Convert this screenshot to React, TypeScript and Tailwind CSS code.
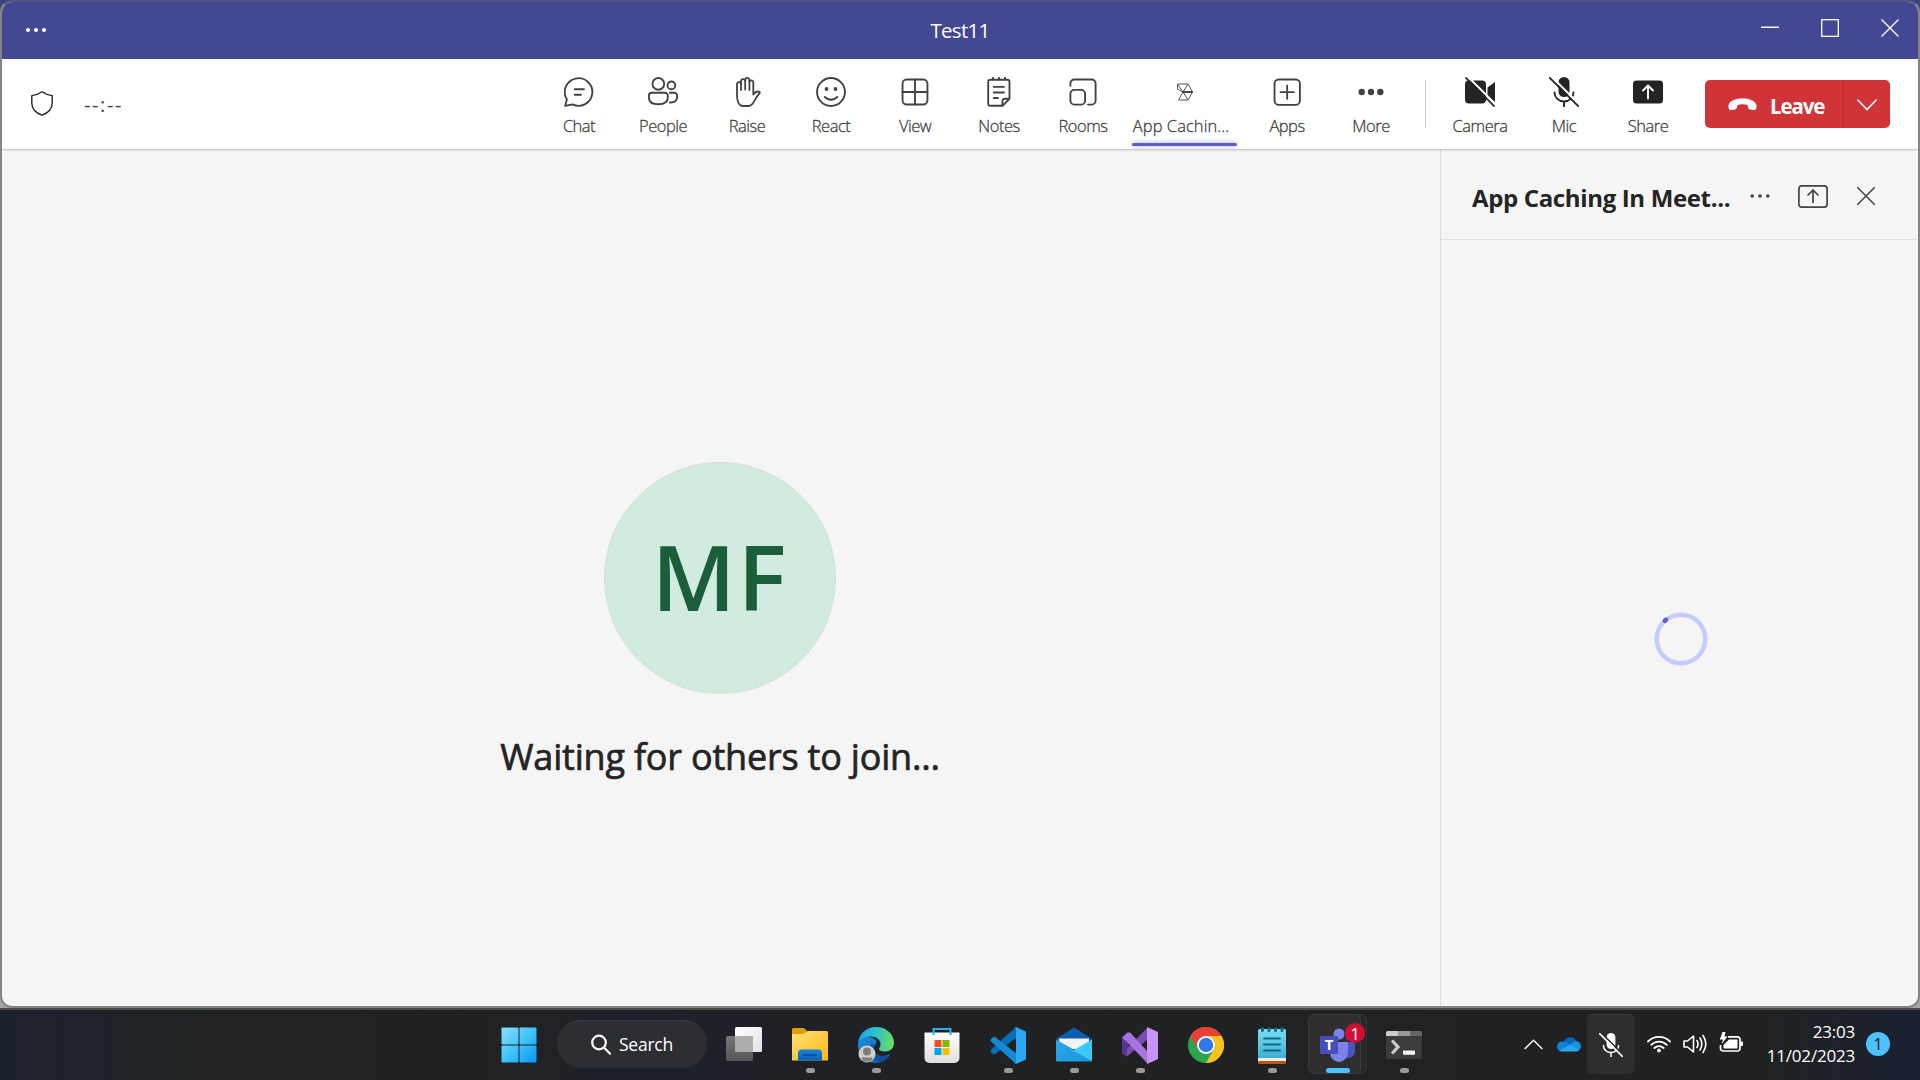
import React from "react";

type P = { children?: React.ReactNode };

function Line({ children, size = 30, w = 1.25 }: P & { size?: number; w?: number }) {
  return (
    <svg width={size} height={size} viewBox="0 0 20 20" fill="none" stroke="currentColor" strokeWidth={w} strokeLinecap="round" strokeLinejoin="round">
      {children}
    </svg>
  );
}

const ChatIcon = () => (
  <Line>
    <path d="M.8 19.300 1.900 14.900A9.200 9.200 0 1 1 5.700 18.300z" />
    <path d="M7.100 8.200h6.200M7.100 11.800h4.200" />
  </Line>
);
const PeopleIcon = () => (
  <Line>
    <circle cx="6.900" cy="4.600" r="3.900" />
    <circle cx="15.600" cy="5.600" r="2.600" />
    <path d="M2.400 10.500h8.900a1.900 1.900 0 0 1 1.900 1.900v1.300c0 3-2.700 4.500-6.300 4.500S.6 16.700.6 13.700v-1.300a1.900 1.900 0 0 1 1.800-1.900z" />
    <path d="M14.600 10.500h3a1.800 1.800 0 0 1 1.800 1.800v.9c0 2.700-1.700 4-4.800 3.800" />
  </Line>
);
const RaiseIcon = () => (
  <svg width="30" height="30" viewBox="0 0 30 30" fill="none" stroke="currentColor" strokeWidth="1.800" strokeLinecap="round" strokeLinejoin="round">
    <path d="M5 18V7.300a2 2 0 0 1 4-.3V4.300a2.100 2.100 0 0 1 4.200-.3V3a2.100 2.100 0 0 1 4.200 0v1.700a2 2 0 0 1 3.900.6V17.500c1.800-2.400 4-3.500 6-2.700.6.300.7.900.3 1.400-2.700 2.900-3.700 4.800-5.400 8-1.500 2.900-3.400 4.800-5.700 4.800h-5.300C6.500 29 5 23.500 5 18z" />
    <path d="M9 7v6M13.200 4v8.500M17.400 4.700v8.300" />
  </svg>
);
const ReactIcon = () => (
  <Line>
    <circle cx="10" cy="10" r="9.300" />
    <path d="M5.800 13.300c2.200 2.500 6.200 2.500 8.400 0" />
    <circle cx="7" cy="8" r=".65" fill="currentColor" />
    <circle cx="13" cy="8" r=".65" fill="currentColor" />
  </Line>
);
const ViewIcon = () => (
  <Line>
    <rect x="1.700" y="1.700" width="16.600" height="16.600" rx="2.800" />
    <path d="M10 1.700v16.600M1.700 10h16.600" />
  </Line>
);
const NotesIcon = () => (
  <Line>
    <path d="M4.200 1.800h11.400A1.300 1.300 0 0 1 17 3.200v11.300l-4.600 4.700H4.200a1.300 1.300 0 0 1-1.400-1.300V3.200a1.300 1.300 0 0 1 1.400-1.400zM12.300 19v-3.200a1.300 1.300 0 0 1 1.300-1.300H17" />
    <path d="M6 .5v1M10 .5v1M14 .5v1M6.500 6.600h6.800M6.500 10.300h6.800M6.500 14h2.800" />
  </Line>
);
const RoomsIcon = () => (
  <Line>
    <path d="M1.600 5.800V4.300A2.600 2.600 0 0 1 4.200 1.700h11.600a2.600 2.600 0 0 1 2.600 2.600v11.500a2.600 2.600 0 0 1-2.600 2.600h-2.500" />
    <rect x="1.600" y="8.600" width="9.800" height="9.800" rx="2.600" />
  </Line>
);
const CacheIcon = () => (
  <svg width="18" height="18" viewBox="0 0 18 18" fill="none" stroke="#555" strokeWidth="1">
    <path d="M1.500 1H12l4.500 8-4.500 8H2.500L7 9 1.500 6zM1.500 1 7 9M12 1 7 9M7 9l5 8" />
    <path d="M7 9h9.500" strokeWidth="1.400" stroke="#111" />
  </svg>
);
const AppsIcon = () => (
  <Line>
    <rect x="1.700" y="1.700" width="16.900" height="16.900" rx="2.800" />
    <path d="M10.100 5.700v8.800M5.700 10.100h8.800" />
  </Line>
);
const MoreIcon = () => (
  <svg width="30" height="30" viewBox="0 0 30 30" fill="currentColor">
    <circle cx="5.700" cy="15" r="3.200" /><circle cx="15" cy="15" r="3.200" /><circle cx="24.300" cy="15" r="3.200" />
  </svg>
);
const CameraIcon = () => (
  <svg width="30" height="30" viewBox="0 0 30 30" fill="#242424">
    <rect x="0" y="3.500" width="21" height="23" rx="4" />
    <path d="M22.500 10.500 30 5v20l-7.500-5.500z" />
    <path d="M2-1.200 31.300 28" stroke="#fff" strokeWidth="2" />
    <path d="M.5.500l29 29" stroke="#242424" strokeWidth="1.700" />
  </svg>
);
const MicOff = ({ size = 30, fg = "#242424", bg = "#fff" }) => (
  <svg width={size} height={size} viewBox="0 0 30 30" fill="none" strokeLinecap="round">
    <rect x="9.500" y="0" width="11" height="20" rx="5.500" fill={fg} />
    <path d="M5.500 15.500a9.500 9 0 0 0 19 0M15 24.500v5" stroke={fg} strokeWidth="1.900" />
    <path d="M2-1 31 28" stroke={bg} strokeWidth="2" />
    <path d="M.8.800l28.400 28.400" stroke={fg} strokeWidth="1.900" />
  </svg>
);
const ShareIcon = () => (
  <svg width="30" height="30" viewBox="0 0 30 30" fill="none" strokeLinecap="round" strokeLinejoin="round">
    <rect x="0" y="3.500" width="30" height="23" rx="3.500" fill="#242424" />
    <path d="M15 21.500V9M10 13.500l5-5 5 5" stroke="#fff" strokeWidth="1.900" />
  </svg>
);

function Tool({ icon, label, wide = false }: { icon: React.ReactNode; label: string; wide?: boolean }) {
  return (
    <div className={"relative flex h-[90px] flex-col items-center text-[#424242] " + (wide ? "w-[120px]" : "w-[84px]")}>
      <div className="mt-[18px] flex h-[30px] items-center">{icon}</div>
      <span className={"mt-[7px] text-[16.5px] leading-[24px] font-light whitespace-nowrap [-webkit-text-stroke:0.3px_#424242] " + (wide ? "-ml-[8px] tracking-[0.05px]" : "tracking-[-0.5px]")}>{label}</span>
      {wide && <div className="absolute bottom-[3px] left-[7px] h-[3px] w-[105px] rounded-full bg-[#5b5fc7] shadow-[0_0_5px_#5b5fc799]" />}
    </div>
  );
}

const WindowsIcon = () => (
  <svg width="36" height="36" viewBox="0 0 36 36">
    <defs><linearGradient id="win" x1="0" y1="0" x2="36" y2="36" gradientUnits="userSpaceOnUse"><stop stopColor="#8be0ff" /><stop offset=".5" stopColor="#3fc4fb" /><stop offset="1" stopColor="#0a93f5" /></linearGradient></defs>
    <g fill="url(#win)"><rect x=".5" y=".5" width="17" height="17" rx="1" /><rect x="18.500" y=".5" width="17" height="17" rx="1" /><rect x=".5" y="18.500" width="17" height="17" rx="1" /><rect x="18.500" y="18.500" width="17" height="17" rx="1" /></g>
  </svg>
);
const TaskViewIcon = () => (
  <svg width="36" height="36" viewBox="0 0 36 36">
    <defs>
      <linearGradient id="tv" x2="1" y2="1"><stop stopColor="#fff" /><stop offset="1" stopColor="#e2e2e2" /></linearGradient>
      <linearGradient id="tv2" x2="0" y2="1"><stop stopColor="#777" /><stop offset="1" stopColor="#555" /></linearGradient>
    </defs>
    <rect x="9" y="0" width="27" height="25" rx="1.500" fill="url(#tv)" />
    <rect x="0" y="9" width="27" height="25" rx="1.500" fill="url(#tv2)" />
    <path d="M9 9h18v16H10.500A1.500 1.500 0 0 1 9 23.500z" fill="#adadad" />
  </svg>
);
const FolderIcon = () => (
  <svg width="36" height="36" viewBox="0 0 36 36">
    <defs><linearGradient id="fo" x2="1" y2="1"><stop stopColor="#ffe07a" /><stop offset="1" stopColor="#fdb813" /></linearGradient><linearGradient id="fb" x2="0" y2="1"><stop stopColor="#1484dc" /><stop offset="1" stopColor="#0664b5" /></linearGradient></defs>
    <path d="M0 2.500A1.500 1.500 0 0 1 1.500 1H12l4 4v6H0z" fill="#e09f00" />
    <path d="M0 7h11.500L16 4h18.500A1.500 1.500 0 0 1 36 5.500v28H0z" fill="url(#fo)" />
    <path d="M6 33.500V26a3.500 3.500 0 0 1 3.500-3.500h17A3.500 3.500 0 0 1 30 26v7.500z" fill="url(#fb)" />
    <path d="M11.500 28h13" stroke="#064a8c" strokeWidth="1.600" strokeLinecap="round" />
  </svg>
);
const EdgeIcon = () => (
  <svg width="36" height="36" viewBox="0 0 36 36">
    <defs>
      <linearGradient id="e1" x1="0" y1=".4" x2="1" y2=".5"><stop stopColor="#1ba5e6" /><stop offset=".5" stopColor="#2fc2c9" /><stop offset="1" stopColor="#6be05a" /></linearGradient>
      <linearGradient id="e2" x2="1" y2="1"><stop stopColor="#1b8fe0" /><stop offset="1" stopColor="#0c59a4" /></linearGradient>
    </defs>
    <path d="M0 18c1-7 8-10 14-7.500 5 2 5 5 3.500 7-4 5 0 11.500 6 11.500 4 0 6-1 9-2.500C29.500 32 24.500 36 18 36 8 36 0 28 0 18z" fill="url(#e2)" />
    <path d="M12 20c0 8 5 15 11 14.800C28 34 31 30 32.500 26.500c-3 1.700-5.500 2.500-9 2.500-6 0-9.500-6-6-11.500-2.500 0-5.500 0-5.500 2.500z" fill="#124f9c" />
    <path d="M0 17C.5 7 8 0 18 0c11 0 18 8 18 15.500 0 6-4 9-9 9-4 0-6-1.300-6-2.500s1.500-2 1.500-5c0-4-4-7.500-10-7.500C6 9.500 1 13 0 17z" fill="url(#e1)" />
    <circle cx="9" cy="27" r="8.500" fill="#d0cecb" /><circle cx="9" cy="24.500" r="4" fill="#807b78" /><path d="M3.500 30.500h11c0 3-2.500 4-5.500 4s-5.500-1-5.500-4z" fill="#807b78" />
  </svg>
);
const StoreIcon = () => (
  <svg width="36" height="36" viewBox="0 0 36 36">
    <defs><linearGradient id="st" x2="0" y2="1"><stop stopColor="#fff" /><stop offset="1" stopColor="#dedede" /></linearGradient></defs>
    <path d="M.5 5.500h35V31a5 5 0 0 1-5 5h-25a5 5 0 0 1-5-5z" fill="url(#st)" />
    <path d="M9.500 8V2h17v6" fill="none" stroke="#2bb0ee" strokeWidth="2" />
    <rect x="10.500" y="13" width="7" height="7" fill="#f25022" /><rect x="18.500" y="13" width="7" height="7" fill="#7fba00" /><rect x="10.500" y="21" width="7" height="7" fill="#00a4ef" /><rect x="18.500" y="21" width="7" height="7" fill="#ffb900" />
  </svg>
);
const CodeIcon = () => (
  <svg width="36" height="37" viewBox="0 0 36 37">
    <path d="M26 0 1 22.500c-.8.800-.8 1.800 0 2.500l2 2c.7.500 1.500.5 2.200 0L27 10z" fill="#0070b8" />
    <path d="M26 37 1 14.500c-.8-.8-.8-1.800 0-2.500l2-2c.7-.5 1.500-.5 2.200 0L27 27z" fill="#1489d8" />
    <path d="M26 0l9 4c.7.300 1 .8 1 1.500v26c0 .700-.3 1.200-1 1.500l-9 4c-1 0-1-.8 0-2V2c-1-1.200-1-2 0-2z" fill="#2ba7f4" />
  </svg>
);
const MailIcon = () => (
  <svg width="36" height="36" viewBox="0 0 36 36">
    <defs><linearGradient id="ml" x2="1" y2="1"><stop stopColor="#2aa9ee" /><stop offset="1" stopColor="#1c94dd" /></linearGradient></defs>
    <path d="M0 12 18 1l18 11v8H0z" fill="#0a4f9e" /><path d="M0 12 18 .5 36 12z" fill="#0c5eb5" />
    <path d="M3 11.500h30V22H3z" fill="#f3f3f5" />
    <path d="M0 12.500 36 33a1.500 1.500 0 0 1-1.500 1.500h-33A1.500 1.500 0 0 1 0 33z" fill="url(#ml)" />
    <path d="M36 12.500V34L17 23.500z" fill="#3acbf5" />
  </svg>
);
const VsIcon = () => (
  <svg width="36" height="37" viewBox="0 0 36 37">
    <path d="M0 26.500 5 29.500 26 12V0z" fill="#7a4db3" />
    <path d="M0 10.500v16l5 3V22l2-3.500L5 15V6z" fill="#59378f" />
    <path d="M0 10.500 5.500 5.500 8 5.500 26 25v12L5 15z" fill="#a873df" />
    <path d="M25 0l10 4.500c.7.300 1 .8 1 1.500v25c0 .700-.3 1.200-1 1.500L25 37z" fill="#c794f7" />
  </svg>
);
const ChromeIcon = () => (
  <svg width="36" height="36" viewBox="0 0 36 36">
    <circle cx="18" cy="18" r="18" fill="#2da44f" />
    <path d="M2.400 9A18 18 0 0 1 33.600 9H18a9 9 0 0 0-7.800 13.500z" fill="#e94235" />
    <path d="M33.600 9A18 18 0 0 1 18 36l7.800-13.500A9 9 0 0 0 18 9z" fill="#fcc21b" />
    <circle cx="18" cy="18" r="9" fill="#fff" /><circle cx="18" cy="18" r="7.200" fill="#2b79ed" />
  </svg>
);
const NotepadIcon = () => (
  <svg width="28" height="37" viewBox="0 0 28 37">
    <defs><linearGradient id="np" x2="0" y2="1"><stop stopColor="#7bdcf2" /><stop offset="1" stopColor="#43afd0" /></linearGradient></defs>
    <rect y="30" width="28" height="7" rx="1" fill="#bb5712" /><rect y="30" width="28" height="4" fill="#eee" />
    <path d="M0 3.500A1.500 1.500 0 0 1 1.500 2h25A1.500 1.500 0 0 1 28 3.500V31H0z" fill="url(#np)" />
    <path d="M6 11.500h16M6 17.500h16M6 23.500h16" stroke="#066a88" strokeWidth="2" strokeLinecap="round" />
    <path d="M4.500 1.500v2M11 1.500v2M17.500 1.500v2M24 1.500v2" stroke="#0b6d8a" strokeWidth="3" strokeLinecap="round" />
  </svg>
);
const TeamsIcon = () => (
  <div className="relative h-9 w-9">
    <svg width="36" height="36" viewBox="0 0 36 36">
      <circle cx="30" cy="9.500" r="4" fill="#5059c9" /><path d="M24 15h11v10a6.500 6.500 0 0 1-11 4z" fill="#4b53bc" />
      <circle cx="19" cy="7" r="5.500" fill="#7b83eb" /><path d="M10 15h18v10a9 9.500 0 0 1-18 1z" fill="#7b83eb" />
      <rect x="0" y="9" width="18" height="18" rx="1.500" fill="#464eb8" />
    </svg>
    <span className="absolute top-[8px] left-0 w-[18px] text-center text-[15px] leading-[19px] font-bold text-white">T</span>
    <span className="absolute -top-[4px] left-[25px] flex h-5 w-5 items-center justify-center rounded-full bg-[#cf1034] text-[17px] leading-none text-white">1</span>
  </div>
);
const TerminalIcon = () => (
  <svg width="36" height="28" viewBox="0 0 36 28">
    <rect width="36" height="28" rx="1.500" fill="#3c3c3c" />
    <path d="M0 5V1.500A1.500 1.500 0 0 1 1.500 0H12v5z" fill="#ccc" /><path d="M12 0h12v5H12z" fill="#999" /><path d="M24 0h10.500A1.500 1.500 0 0 1 36 1.500V5H24z" fill="#666" />
    <path d="M6 9.500l6 6.500-6 6.500" fill="none" stroke="#ccc" strokeWidth="3.200" /><rect x="17" y="19.500" width="12" height="4.200" rx=".6" fill="#f2f2f2" />
  </svg>
);

function Task({ children, run = false, active = false }: P & { run?: boolean; active?: boolean }) {
  return (
    <div className="relative flex h-[70px] w-[66px] items-center justify-center">
      {active && <div className="absolute top-1 left-[10px] h-[60px] w-[52px] rounded-md border border-[#343434] bg-[#282829]" />}
      {active && <div className="absolute top-1 left-[3px] h-[60px] w-[53px] rounded-md border border-[#3a3a3a] bg-[#2e2e2f]" />}
      <div className="relative">{children}</div>
      {run && <div className="absolute bottom-[7px] left-[29px] h-[5px] w-[9px] rounded-full bg-[#9a9a9a]" />}
      {active && <div className="absolute bottom-[7px] left-[21px] h-[5px] w-6 rounded-full bg-[#4cc2ff]" />}
    </div>
  );
}

function TitleBar() {
  return (
    <header className="grid h-[57px] grid-cols-3 items-center bg-[#444791] text-white">
      <div className="flex gap-[4px] pb-[2px] pl-[24px]">
        <i className="h-[4px] w-[4px] rounded-full bg-white" /><i className="h-[4px] w-[4px] rounded-full bg-white" /><i className="h-[4px] w-[4px] rounded-full bg-white" />
      </div>
      <div className="pb-[2px] text-center text-[20.5px] leading-[28px] tracking-[-0.7px]">Test11</div>
      <div className="flex items-center justify-end gap-[42px] pr-[19px] pb-[5px]">
        <svg width="18" height="18" viewBox="0 0 18 18"><path d="M0 8.200h18" stroke="#fff" strokeWidth="1.400" /></svg>
        <svg width="18" height="18" viewBox="0 0 18 18"><rect x=".7" y=".7" width="16.600" height="16.600" fill="none" stroke="#fff" strokeWidth="1.300" /></svg>
        <svg width="18" height="18" viewBox="0 0 18 18"><path d="M.5.500l17 17M17.500.500l-17 17" stroke="#fff" strokeWidth="1.300" /></svg>
      </div>
    </header>
  );
}

function Toolbar() {
  return (
    <div className="relative z-10 flex h-[90px] items-start bg-white shadow-[0_1px_2px_#0000003a]">
      <svg className="mt-[32px] ml-[29px]" width="22" height="25" viewBox="0 0 22 25" fill="none" stroke="#242424" strokeWidth="1.400" strokeLinejoin="round">
        <path d="M11 .8C8 3 4.500 4.300.8 4.600V12c0 6 4.200 10 10.200 12.200C17 22 21.200 18 21.200 12V4.600C17.500 4.300 14 3 11 .8z" />
      </svg>
      <span className="mt-[32px] ml-[31px] text-[20px] leading-[28px] tracking-[1.600px] text-[#424242]">--:--</span>
      <div className="ml-auto flex">
        <Tool icon={<ChatIcon />} label="Chat" />
        <Tool icon={<PeopleIcon />} label="People" />
        <Tool icon={<RaiseIcon />} label="Raise" />
        <Tool icon={<ReactIcon />} label="React" />
        <Tool icon={<ViewIcon />} label="View" />
        <Tool icon={<NotesIcon />} label="Notes" />
        <Tool icon={<RoomsIcon />} label="Rooms" />
        <Tool icon={<CacheIcon />} label="App Cachin..." wide />
        <Tool icon={<AppsIcon />} label="Apps" />
        <Tool icon={<MoreIcon />} label="More" />
        <div className="mt-[21px] mr-[12px] ml-[12px] h-12 w-px bg-[#d1d1d1]" />
        <Tool icon={<CameraIcon />} label="Camera" />
        <Tool icon={<MicOff />} label="Mic" />
        <Tool icon={<ShareIcon />} label="Share" />
      </div>
      <div className="mt-[21px] mr-[28px] ml-[15px] flex h-12 w-[185px] overflow-hidden rounded-[5px] bg-[#d13438] text-white">
        <div className="flex w-[139px] items-center border-r border-[#b92b30] pl-[23px]">
          <svg width="29" height="13" viewBox="0 0 29 13" fill="#fff"><path d="M14.500.500C8 .500 2.500 2.500.800 6.300c-.6 1.500-.5 3.200.2 4.700.4.900 1.300 1.300 2.300 1.100l3.700-.7c1-.2 1.700-1 1.900-1.900l.6-2.600c3.200-1 6.800-1 10 0l.6 2.600c.2.900.9 1.700 1.900 1.900l3.700.7c1 .2 1.900-.2 2.300-1.100.7-1.500.8-3.200.2-4.700C26.500 2.500 21 .500 14.500.500z" /></svg>
          <span className="ml-[13px] pt-[4px] text-[20.5px] font-bold tracking-[-1.1px]">Leave</span>
        </div>
        <div className="flex flex-1 items-center justify-center">
          <svg className="mt-[2px]" width="20" height="12" viewBox="0 0 20 12" fill="none" stroke="#fff" strokeWidth="1.600" strokeLinecap="round"><path d="M.8 1 10 10.500 19.200 1" /></svg>
        </div>
      </div>
    </div>
  );
}

function Stage() {
  return (
    <main className="flex w-[1436px] shrink-0 flex-col items-center pt-[313px]">
      <div className="flex h-[232px] w-[232px] items-center justify-center rounded-full border border-[#d3e0d9] bg-[#d1ebdf]">
        <span className="-mt-[4px] text-[91px] leading-none font-semibold tracking-[2px] text-[#1b5e3b]">MF</span>
      </div>
      <h1 className="mt-[39px] text-[36px] leading-[48px] tracking-[-0.2px] whitespace-nowrap text-[#242424] [-webkit-text-stroke:0.7px_#242424]">Waiting for others to join...</h1>
    </main>
  );
}

function SidePanel() {
  return (
    <aside className="ml-[2px] flex flex-1 flex-col border-l border-[#dcdcdc]">
      <div className="flex h-[91px] items-center border-b border-[#dfdfdf] pt-[4px] pl-[31px] text-[#424242]">
        <h2 className="w-[272px] pt-[3px] text-[24px] leading-[32px] font-bold tracking-[-0.35px] whitespace-nowrap text-[#242424]">App Caching In Meet...</h2>
        <svg className="ml-[6px]" width="20" height="20" viewBox="0 0 20 20" fill="#424242"><circle cx="2.200" cy="10" r="1.800" /><circle cx="10" cy="10" r="1.800" /><circle cx="17.800" cy="10" r="1.800" /></svg>
        <svg className="ml-[28px]" width="30" height="23" viewBox="0 0 30 23" fill="none" stroke="#424242" strokeWidth="1.700" strokeLinecap="round" strokeLinejoin="round"><rect x=".9" y=".9" width="28.200" height="21.200" rx="2.800" /><path d="M15 17.500V5M10 10l5-5 5 5" /></svg>
        <svg className="ml-[29px]" width="18" height="18" viewBox="0 0 18 18"><path d="M.5.500l17 17M17.500.500l-17 17" stroke="#424242" strokeWidth="1.500" strokeLinecap="round" /></svg>
      </div>
      <div className="flex flex-1 items-center justify-center pt-[32px] pl-[3px]">
        <svg width="54" height="54" viewBox="0 0 54 54" fill="none"><circle cx="27" cy="27" r="24.300" stroke="#c5cbfa" strokeWidth="4.500" /><path d="M10.800 8.800l1.200-1" stroke="#5b5fc7" strokeWidth="4.500" strokeLinecap="round" /></svg>
      </div>
    </aside>
  );
}

function Taskbar() {
  return (
    <footer className="flex h-[70px] bg-[linear-gradient(90deg,#1c222c_0%,#1e2229_5%,#212321_12%,#202221_24%,#1f212a_32%,#202123_50%,#202222_92%,#1b2130_99%)] text-white">
      <div className="ml-[486px] flex h-[70px] w-[66px] items-center justify-center"><WindowsIcon /></div>
      <div className="mt-[10px] ml-[5px] flex h-12 w-[150px] items-center rounded-full border-t border-[#3c3c40] bg-[#2d2e33] pl-[34px]">
        <svg width="20" height="21" viewBox="0 0 20 21" fill="none" stroke="#fff" strokeWidth="2.200" strokeLinecap="round"><circle cx="8" cy="8.500" r="6.800" /><path d="M13 13.500l6 6.200" /></svg>
        <span className="ml-[8px] text-[17.500px] tracking-[-0.25px]">Search</span>
      </div>
      <div className="ml-[4px] flex">
        <Task><TaskViewIcon /></Task>
        <Task run><FolderIcon /></Task>
        <Task run><EdgeIcon /></Task>
        <Task><StoreIcon /></Task>
        <Task run><CodeIcon /></Task>
        <Task run><MailIcon /></Task>
        <Task run><VsIcon /></Task>
        <Task><ChromeIcon /></Task>
        <Task run><NotepadIcon /></Task>
        <Task active><TeamsIcon /></Task>
        <Task run><TerminalIcon /></Task>
      </div>
      <div className="mr-[30px] ml-auto flex h-[68px] items-center">
        <svg width="19" height="11" viewBox="0 0 19 11" fill="none" stroke="#fff" strokeWidth="1.400"><path d="M.7 10 9.500 1.200 18.300 10" /></svg>
        <svg className="ml-[14px]" width="24" height="16" viewBox="0 0 24 16"><path d="M7 6a6.500 6.500 0 0 1 12.300-.8l-5 6z" fill="#0a64b8" /><path d="M5 15.500A5 5 0 0 1 5 5.500c3-.5 5 .5 9 4l-8 6z" fill="#0f7fd8" /><path d="M12 9l6.500-4A5.200 5.200 0 0 1 19 15.500l-4-1z" fill="#1793e0" /><path d="M2 14.500 12.500 9l9.500 5.300a5 5 0 0 1-3 1.200H5a5 5 0 0 1-3-1z" fill="#29a8ee" /></svg>
        <div className="ml-[6px] flex h-[60px] w-12 items-center justify-center rounded-md border-t border-[#3a3b3c] bg-[#2d2e2f]"><MicOff size={24} fg="#ffffff" bg="#2d2e2f" /></div>
        <svg className="ml-[12px]" width="24" height="18" viewBox="0 0 24 18" fill="none" stroke="#fff" strokeWidth="1.800" strokeLinecap="round"><path d="M1 6.500a15.500 15.500 0 0 1 22 0M4.200 9.800a11 11 0 0 1 15.600 0M7.400 13a6.500 6.500 0 0 1 9.200 0" /><circle cx="12" cy="15.500" r="1.500" fill="#fff" stroke="#fff" strokeWidth="1" /></svg>
        <svg className="ml-[12px]" width="24" height="20" viewBox="0 0 24 20" fill="none" stroke="#fff" strokeWidth="1.600" strokeLinecap="round" strokeLinejoin="round"><path d="M1 7v6h3.500L10.500 18V2L4.500 7z" /><path d="M14 6.500c1.300 2.200 1.300 4.800 0 7M17 4c2.300 3.800 2.300 8.200 0 12M20 1.500c3.700 5.500 3.700 11.500 0 17" /></svg>
        <svg className="mb-[4px] ml-[12px]" width="25" height="21" viewBox="0 0 25 21" fill="none" stroke="#fff"><path d="M9 4.800h9.500a2.500 2.500 0 0 1 2.500 2.500v9.200A2.500 2.500 0 0 1 18.500 19H4a2.500 2.500 0 0 1-2.500-2.500V13" strokeWidth="1.700" /><path d="M10 7.500h8.500v9h-14V13z" fill="#fff" stroke="none" /><path d="M22.500 9.500v4.500" strokeWidth="2.800" /><path d="M3.500 0h3L5.500 4.500h3L2.800 12 3.800 7.500H.8z" fill="#fff" stroke="none" /></svg>
        <div className="ml-[11px] w-[100px] text-right text-[17px] leading-6 tracking-[-0.2px] whitespace-nowrap"><div>23:03</div><div>11/02/2023</div></div>
        <div className="ml-[11px] flex h-6 w-6 items-center justify-center rounded-full bg-[#4cc2ff] text-[16px] leading-none text-[#111]">1</div>
      </div>
    </footer>
  );
}

export default function App() {
  return (
    <div className="flex h-[1080px] w-[1920px] flex-col overflow-hidden bg-[#202124] font-['Open_Sans','Noto_Sans',sans-serif]">
      <div className="h-[1010px] border-b-2 border-[#4a4a4a] bg-[linear-gradient(#3f4080_0,#3f4080_72px,#a0a0a0_72px,#a6a6a6_100%)]">
        <div className="flex h-[1008px] flex-col overflow-hidden rounded-xl border-2 border-[#858585] border-t-[#54577d] bg-[#f5f5f5]">
          <TitleBar />
          <Toolbar />
          <div className="flex flex-1">
            <Stage />
            <SidePanel />
          </div>
        </div>
      </div>
      <Taskbar />
    </div>
  );
}
